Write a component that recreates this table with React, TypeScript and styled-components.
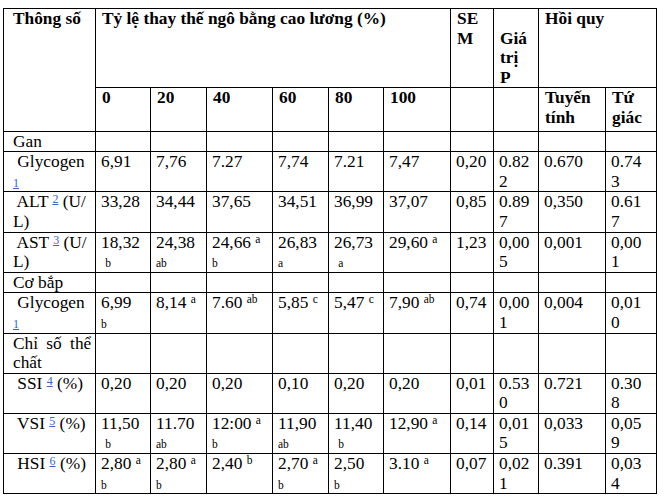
import React from "react";
import styled, { createGlobalStyle } from "styled-components";

const GlobalStyle = createGlobalStyle`
  html, body {
    margin: 0;
    background: #fff;
  }
  body {
    padding: 8px 0 0 3px;
    font-family: "Liberation Serif", "Times New Roman", serif;
    color: #000;
  }
`;

const Table = styled.table`
  border-collapse: collapse;
  table-layout: fixed;
  width: 653px;
  font-family: "Liberation Serif", "Times New Roman", serif;
  font-size: 17.33px;
  line-height: 19.6px;
`;

const Col = styled.col<{ $w: number }>`
  width: ${({ $w }) => $w}px;
`;

const Head = styled.th<{ $first?: boolean; $low?: boolean }>`
  border: 1px solid #000;
  padding: 0 4px ${({ $low }) => ($low ? "3px" : "0")}
    ${({ $first }) => ($first ? "9px" : "6px")};
  text-align: left;
  vertical-align: top;
  font-weight: 700;
  white-space: pre;
  overflow: hidden;
`;

const Cell = styled.td<{ $first?: boolean }>`
  border: 1px solid #000;
  padding: 0 4px 0 ${({ $first }) => ($first ? "9px" : "5px")};
  vertical-align: top;
  font-weight: 400;
  white-space: pre;
  overflow: hidden;
`;

const Mark = styled.span<{ $raised?: boolean }>`
  font-size: 11.5px;
  line-height: 0;
  vertical-align: ${({ $raised }) => ($raised ? "5px" : "0")};
`;

const Note = styled.a<{ $raised?: boolean }>`
  font-size: 12px;
  line-height: 0;
  color: #3366cc;
  text-decoration: underline;
  vertical-align: ${({ $raised }) => ($raised ? "4px" : "0")};
`;

const Spread = styled.span`
  word-spacing: 4px;
`;

// ^x raised letter, _x letter on its own line, #n raised note link, ~n note link
const renderLine = (line: string) =>
  line.split(/([\^_#~]\S+)/).map((part, i) => {
    if (!part) return null;
    const body = part.slice(1);
    switch (part[0]) {
      case "^":
        return <Mark key={i} $raised>{body}</Mark>;
      case "_":
        return <Mark key={i}>{body}</Mark>;
      case "#":
        return <Note key={i} $raised>{body}</Note>;
      case "~":
        return <Note key={i}>{body}</Note>;
      default:
        return part;
    }
  });

const Content = ({ text }: { text: string }) => (
  <>
    {text.split("|").map((line, i) => (
      <React.Fragment key={i}>
        {i > 0 && <br />}
        {renderLine(line)}
      </React.Fragment>
    ))}
  </>
);

const widths = [92, 55, 56, 66, 56, 55, 67, 43, 45, 67, 51];

type Row = { label: string; values?: string[]; spread?: boolean };

const rows: Row[] = [
  { label: "Gan" },
  {
    label: " Glycogen|~1",
    values: ["6,91", "7,76", "7.27", "7,74", "7.21", "7,47", "0,20", "0.82|2", "0.670", "0.74|3"],
  },
  {
    label: " ALT #2 (U/|L)",
    values: ["33,28", "34,44", "37,65", "34,51", "36,99", "37,07", "0,85", "0.89|7", "0,350", "0.61|7"],
  },
  {
    label: " AST #3 (U/|L)",
    values: ["18,32| _b", "24,38|_ab", "24,66 ^a|_b", "26,83|_a", "26,73| _a", "29,60 ^a", "1,23", "0,00|5", "0,001", "0,00|1"],
  },
  { label: "Cơ bắp" },
  {
    label: " Glycogen|~1",
    values: ["6,99|_b", "8,14 ^a", "7.60 ^ab", "5,85 ^c", "5,47 ^c", "7,90 ^ab", "0,74", "0,00|1", "0,004", "0,01|0"],
  },
  { label: "Chỉ số thể|chất", spread: true },
  {
    label: " SSI #4 (%)",
    values: ["0,20", "0,20", "0,20", "0,10", "0,20", "0,20", "0,01", "0.53|0", "0.721", "0.30|8"],
  },
  {
    label: " VSI #5 (%)",
    values: ["11,50| _b", "11.70|_ab", "12:00 ^a|_b", "11,90|_ab", "11,40| _b", "12,90 ^a", "0,14", "0,01|5", "0,033", "0,05|9"],
  },
  {
    label: " HSI #6 (%)",
    values: ["2,80 ^a|_b", "2,80 ^a|_b", "2,40 ^b", "2,70 ^a|_b", "2,50|_b", "3.10 ^a", "0,07", "0,02|1", "0.391", "0,03|4"],
  },
];

const levels = ["0", "20", "40", "60", "80", "100", "", "", "Tuyến|tính", "Tứ|giác"];

const LabelCell = ({ row }: { row: Row }) => {
  if (row.spread) {
    const [first, rest] = row.label.split("|");
    return (
      <Cell $first>
        <Spread>{first}</Spread>
        <br />
        {rest}
      </Cell>
    );
  }
  return (
    <Cell $first>
      <Content text={row.label} />
    </Cell>
  );
};

export default function App() {
  return (
    <>
      <GlobalStyle />
      <Table>
        <colgroup>
          {widths.map((w, i) => (
            <Col key={i} $w={w} />
          ))}
        </colgroup>
        <thead>
          <tr>
            <Head $first rowSpan={2}>Thông số</Head>
            <Head colSpan={6}>Tỷ lệ thay thế ngô bằng cao lương (%)</Head>
            <Head>
              <Content text="SE|M" />
            </Head>
            <Head>
              <Content text="|Giá|trị|P" />
            </Head>
            <Head colSpan={2}>Hồi quy</Head>
          </tr>
          <tr>
            {levels.map((l, i) => (
              <Head key={i} $low>
                <Content text={l} />
              </Head>
            ))}
          </tr>
        </thead>
        <tbody>
          {rows.map((row, r) => (
            <tr key={r}>
              <LabelCell row={row} />
              {(row.values ?? Array(10).fill("")).map((v, c) => (
                <Cell key={c}>
                  <Content text={v} />
                </Cell>
              ))}
            </tr>
          ))}
        </tbody>
      </Table>
    </>
  );
}
